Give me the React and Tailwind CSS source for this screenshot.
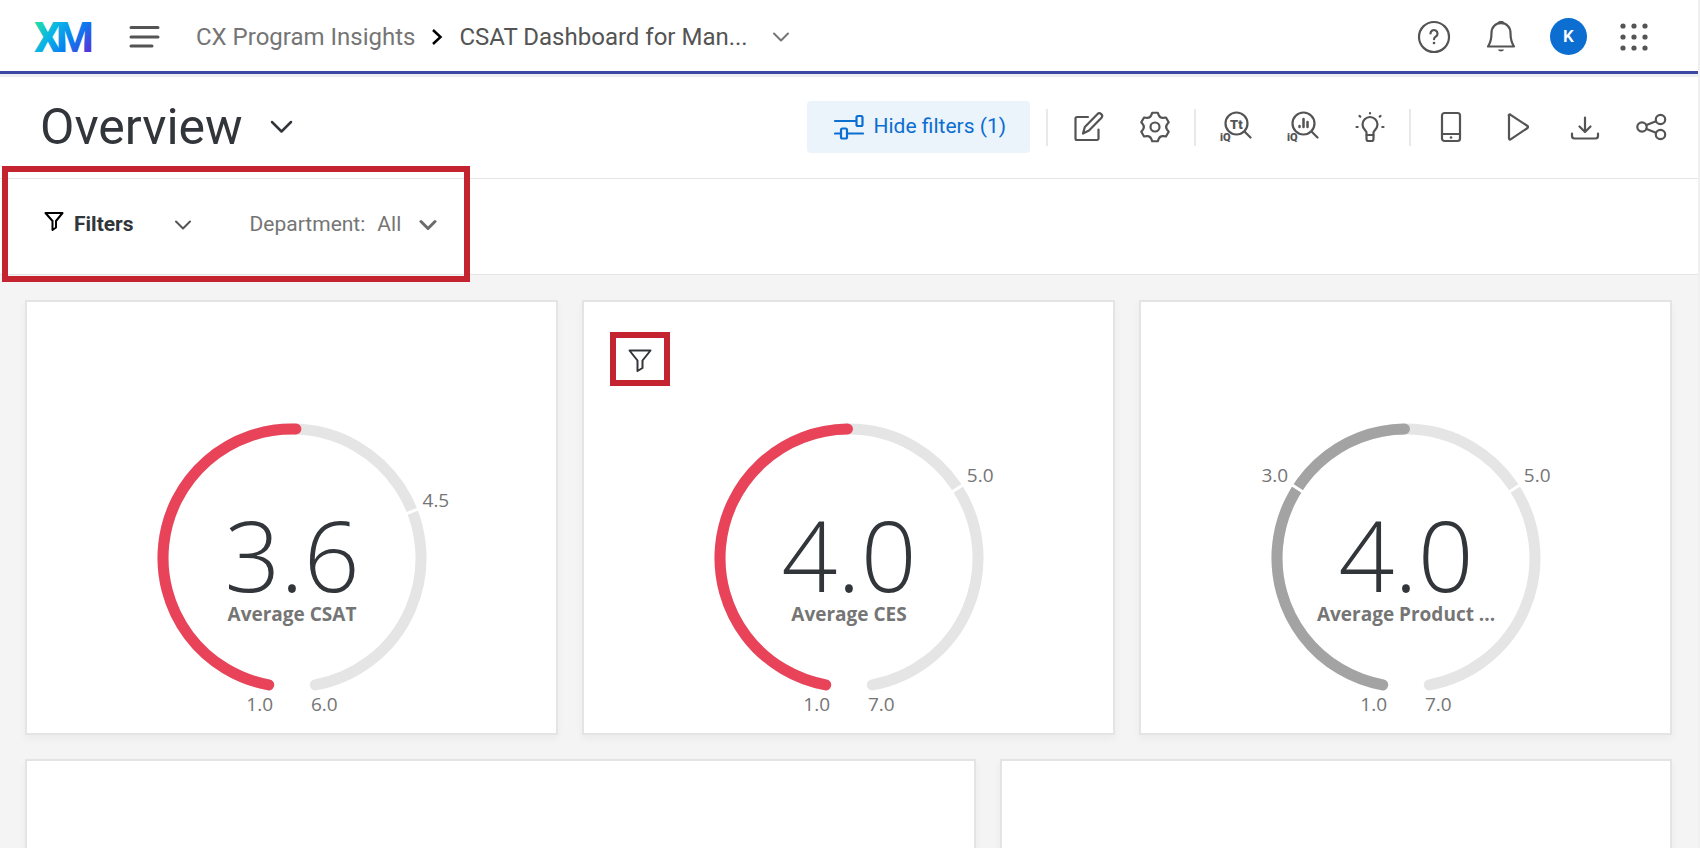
import React from 'react';

const ink = '#545454';

function Icon({ size = 32, color = ink, width = 2.2, className = '', children }) {
  return (
    <svg
      width={size}
      height={size}
      viewBox={`0 0 ${size} ${size}`}
      fill="none"
      stroke={color}
      strokeWidth={width}
      strokeLinecap="round"
      strokeLinejoin="round"
      className={`shrink-0 ${className}`}
      aria-hidden="true"
    >
      {children}
    </svg>
  );
}

function Chevron({ color = ink, width = 2 }) {
  return (
    <svg width="18" height="12" viewBox="0 0 18 12" fill="none" stroke={color} strokeWidth={width} strokeLinecap="round" strokeLinejoin="round" className="shrink-0" aria-hidden="true">
      <path d="M2 2.5l7 7 7-7" />
    </svg>
  );
}

function Funnel({ color = '#32363a' }) {
  return (
    <Icon size={24} color={color} width={2}>
      <path d="M1.500 1.500h21l-8 10v7.500l-5 3v-10.500z" />
    </Icon>
  );
}

function Logo() {
  return (
    <svg width="58" height="34" viewBox="0 0 58 34" role="img" aria-label="XM" className="shrink-0 overflow-visible">
      <defs>
        <linearGradient id="xm" gradientUnits="userSpaceOnUse" x1="4" y1="0" x2="52" y2="36">
          <stop offset="0" stopColor="#21dbaa" />
          <stop offset="0.3" stopColor="#0bb4e6" />
          <stop offset="0.65" stopColor="#0a7cf0" />
          <stop offset="1" stopColor="#5a2fd8" />
        </linearGradient>
      </defs>
      <g fill="url(#xm)" fontFamily="Roboto, sans-serif" fontWeight="800" fontSize="43">
        <text x="-1" y="32">X</text>
        <text x="21" y="32">M</text>
      </g>
    </svg>
  );
}

// point on a circle around the origin, angle in degrees clockwise from the top
function polar(r, deg) {
  const a = (deg * Math.PI) / 180;
  return [r * Math.sin(a), -r * Math.cos(a)];
}

function gearPath() {
  let d = '';
  for (let k = 0; k < 6; k++) {
    const a = k * 60;
    const p = (r, deg) => polar(r, a + deg).map(n => (n + 16).toFixed(2)).join(' ');
    d += `${k === 0 ? 'M' : 'L'}${p(14.5, -11)} L${p(14.5, 11)} L${p(12.3, 18)} Q${p(10.2, 30)} ${p(12.3, 42)} `;
  }
  return d + 'Z';
}

const icons = {
  Edit: (
    <>
      <path d="M16 6H5a1.500 1.500 0 0 0-1.500 1.500v20A1.500 1.500 0 0 0 5 29h20a1.500 1.500 0 0 0 1.500-1.500V18.500" />
      <path d="M11 22.500l1.800-6.500L25.300 3.200a2.700 2.700 0 0 1 4 3.800L17 19.600z" />
    </>
  ),
  Settings: (
    <>
      <path d={gearPath()} />
      <circle cx="16" cy="16" r="4.500" />
    </>
  ),
  'Text iQ': (
    <>
      <circle cx="16.500" cy="12.500" r="11" />
      <path d="M24.500 20.500l6 6" />
      <g fill={ink} stroke="none" fontFamily="Roboto, sans-serif" fontWeight="900">
        <text x="10" y="17.500" fontSize="13">Tt</text>
        <text x="0" y="30" fontSize="11">iQ</text>
      </g>
    </>
  ),
  'Stats iQ': (
    <>
      <circle cx="16.500" cy="12.500" r="11" />
      <path d="M24.500 20.500l6 6" />
      <path d="M12.500 15v1M16.500 8v8M20.500 11v5" strokeWidth="2.500" />
      <text x="0" y="30" fill={ink} stroke="none" fontFamily="Roboto, sans-serif" fontWeight="900" fontSize="11">iQ</text>
    </>
  ),
  Insights: (
    <>
      <path d="M12.500 24v-2.500c0-1.500-4-3.500-4-8a7.500 7.500 0 0 1 15 0c0 4.500-4 6.500-4 8V24z" />
      <path d="M12.500 24.500v3.500a2 2 0 0 0 2 2h3a2 2 0 0 0 2-2v-3.500" />
      <path d="M16 2v.500M5.500 5l.800.600M26.500 5l-.800.600M2.500 16h1.200M28.300 16h1.200" />
    </>
  ),
  'Mobile view': (
    <>
      <rect x="7" y="2" width="18" height="28" rx="2.500" />
      <path d="M7 23h18" />
      <circle cx="16" cy="26.500" r="1.300" fill={ink} stroke="none" />
    </>
  ),
  Present: <path d="M7 5v22.500a1 1 0 0 0 1.600.800L25.500 17a1.200 1.200 0 0 0 0-2L8.600 3.800A1 1 0 0 0 7 5z" />,
  Download: (
    <>
      <path d="M16 6.500v14M10.500 15.500l5.500 5.500 5.500-5.500" />
      <path d="M3 22.500V25a2.500 2.500 0 0 0 2.500 2.500h21A2.500 2.500 0 0 0 29 25v-2.500" />
    </>
  ),
  Share: (
    <>
      <circle cx="6" cy="16" r="4.700" />
      <circle cx="24.500" cy="8.500" r="4.700" />
      <circle cx="24.500" cy="23.500" r="4.700" />
      <path d="M10.500 14l9.500-3.700M10.500 18l9.500 3.700" />
    </>
  ),
};

const toolGroups = [
  ['Edit', 'Settings'],
  ['Text iQ', 'Stats iQ', 'Insights'],
  ['Mobile view', 'Present', 'Download', 'Share'],
];

const gauges = [
  { label: 'Average CSAT', value: '3.6', exact: 3.56, min: 1, max: 6, color: '#e84359', ticks: [4.5] },
  { label: 'Average CES', value: '4.0', exact: 4.03, min: 1, max: 7, color: '#e84359', ticks: [5], filtered: true },
  { label: 'Average Product ...', value: '4.0', exact: 4.03, min: 1, max: 7, color: '#a3a3a3', ticks: [3, 5] },
];

const START = 188;
const SWEEP = 344;
const RADIUS = 129;

function arc(from, to) {
  const [x1, y1] = polar(RADIUS, from);
  const [x2, y2] = polar(RADIUS, to);
  return `M${x1} ${y1} A${RADIUS} ${RADIUS} 0 ${to - from > 180 ? 1 : 0} 1 ${x2} ${y2}`;
}

function Gauge({ label, value, exact, min, max, color, ticks }) {
  const angle = v => START + ((v - min) / (max - min)) * SWEEP;
  const cap = 2.4; // degrees taken up by a round line end

  return (
    <svg width="340" height="320" viewBox="-170 -150 340 320" className="mx-auto block" fontFamily="'Open Sans', sans-serif" role="img" aria-label={`${label}: ${value}`}>
      <g fill="none" strokeWidth="11" strokeLinecap="round">
        <path d={arc(START + cap, START + SWEEP - cap)} stroke="#e5e5e5" />
        <path d={arc(START + cap, angle(exact) - cap)} stroke={color} />
      </g>
      {ticks.map(t => {
        const [x1, y1] = polar(121, angle(t));
        const [x2, y2] = polar(137, angle(t));
        const [tx, ty] = polar(140, angle(t));
        return (
          <g key={t}>
            <line x1={x1} y1={y1} x2={x2} y2={y2} stroke="#fff" strokeWidth="3" />
            <text x={tx} y={ty} textAnchor={tx > 0 ? 'start' : 'end'} fill="#757575" fontSize="19">{t.toFixed(1)}</text>
          </g>
        );
      })}
      <text x="0" y="34" textAnchor="middle" fill="#32363a" fontSize="98" fontWeight="300">{value}</text>
      <text x="0" y="63" textAnchor="middle" fill="#757575" fontSize="19" fontWeight="700">{label}</text>
      <text x="-19" y="153" textAnchor="end" fill="#757575" fontSize="19">{min.toFixed(1)}</text>
      <text x="19" y="153" fill="#757575" fontSize="19">{max.toFixed(1)}</text>
    </svg>
  );
}

const card = 'h-[435px] border-2 border-[#e4e4e4] bg-white shadow-[0_4px_8px_rgba(0,0,0,0.04)]';

export default function App() {
  return (
    <div className="flex h-screen flex-col overflow-hidden border-r-2 border-[#f0f0f0] bg-white font-['Roboto',sans-serif] text-[#32363a]">
      {/* TOP BAR */}
      <header className="relative flex h-[74px] shrink-0 items-center border-b-[3px] border-[#3a47a4] pt-0.5 pr-[49px] pl-[35px] shadow-[0_3px_0_#eceef4]">
        <a href="#home" aria-label="Home"><Logo /></a>
        <button className="ml-9" aria-label="Menu">
          <Icon width={3}>
            <path d="M2 6.500h27M2 16h27M2 25h21" />
          </Icon>
        </button>
        <nav className="ml-[35px] flex items-center text-2xl">
          <a href="#program" className="text-[#757575]">CX Program Insights</a>
          <svg width="12" height="18" viewBox="0 0 12 18" fill="none" stroke="#000" strokeWidth="2.500" className="mx-4" aria-hidden="true">
            <path d="M2 2l7.500 7L2 16" />
          </svg>
          <button className="flex items-center gap-6 text-[#545454]">
            CSAT Dashboard for Man...
            <Chevron color="#757575" />
          </button>
        </nav>
        <div className="ml-auto flex items-center">
          <button className="flex w-[67px] justify-center" aria-label="Help">
            <Icon size={34}>
              <circle cx="17" cy="17" r="15" />
              <path d="M13.500 13.500a3.500 3.500 0 1 1 5.500 2.900c-1.300.900-2 1.500-2 2.800" />
              <circle cx="17" cy="23" r="1.300" fill={ink} stroke="none" />
            </Icon>
          </button>
          <button className="flex w-[67px] justify-center" aria-label="Notifications">
            <Icon size={34}>
              <path d="M17 3.200c-5.800 0-9.500 4-9.500 9.800 0 6-.800 9.500-3.500 13.500h26c-2.700-4-3.500-7.500-3.500-13.500 0-5.800-3.700-9.800-9.500-9.800z" />
              <path d="M14.500 3h5l-1.500-1h-2z" fill={ink} />
              <path d="M14 29.500h6c-.500 2.500-5.500 2.500-6 0z" fill={ink} stroke="none" />
            </Icon>
          </button>
          <button className="mx-4 flex h-[37px] w-[37px] items-center justify-center rounded-full bg-[#0b6ed0] text-[17px] font-semibold text-white">
            K
          </button>
          <button className="ml-4" aria-label="Apps">
            <svg width="30" height="30" viewBox="0 0 30 30" fill={ink} aria-hidden="true">
              {[4, 15, 26].map(y => [4, 15, 26].map(x => <circle key={`${x}-${y}`} cx={x} cy={y} r="2.600" />))}
            </svg>
          </button>
        </div>
      </header>

      {/* PAGE TITLE AND TOOLBAR */}
      <div className="flex h-[105px] shrink-0 items-center border-b border-[#e4e4e4] pt-0.5 pr-[13px] pl-10">
        <button className="flex items-center gap-[27px]">
          <h1 className="text-[50px] leading-[60px]">Overview</h1>
          <svg width="24" height="14" viewBox="0 0 24 14" fill="none" stroke="#32363a" strokeWidth="2.500" strokeLinecap="round" strokeLinejoin="round" aria-hidden="true">
            <path d="M2 2l9.500 9.500L21 2" />
          </svg>
        </button>
        <button className="mr-[10px] ml-auto flex h-[52px] items-center gap-2.5 rounded bg-[#ebf4fb] pr-6 pl-[27px] text-[21px] text-[#0b6ed0]">
          <Icon size={30} color="#0b6ed0">
            <path d="M1 9h21M1 21.500h6M13 21.500h16" />
            <rect x="22.500" y="4" width="6" height="10" rx="1.500" />
            <rect x="7" y="16.500" width="6" height="10" rx="1.500" />
          </Icon>
          Hide filters (1)
        </button>
        {toolGroups.map(group => (
          <div key={group[0]} className="flex items-center">
            <span className="mx-1.5 h-[37px] w-0.5 bg-[#e9e9e9]" />
            {group.map(name => (
              <button key={name} className="flex w-[67px] justify-center" aria-label={name}>
                <Icon>{icons[name]}</Icon>
              </button>
            ))}
          </div>
        ))}
      </div>

      {/* FILTER BAR */}
      <div className="relative flex h-24 shrink-0 items-center border-b border-[#e4e4e4] pb-1 pl-11 text-[21px]">
        <div className="pointer-events-none absolute -top-[13px] left-0.5 h-[116px] w-[468px] border-[6px] border-[#c32430]" />
        <button className="flex items-center font-bold">
          <Icon size={20} color="#000" width={2} className="mr-2.5 mb-2">
            <path d="M1.500 2h17l-6.500 8v6.500l-3.500 2.500v-9z" />
          </Icon>
          <span className="mr-10">Filters</span>
          <Chevron />
        </button>
        <label htmlFor="department" className="ml-[58px] text-[#757575]">Department:</label>
        <div className="relative ml-3 flex items-center text-[#757575]">
          <select id="department" className="w-[60px] appearance-none bg-transparent">
            <option>All</option>
          </select>
          <span className="pointer-events-none absolute right-0">
            <Chevron color="#6b6b6b" width={3} />
          </span>
        </div>
      </div>

      {/* WIDGETS */}
      <main className="grid flex-1 grid-cols-12 content-start gap-6 overflow-hidden bg-[#f4f4f4] pt-[25px] pr-[26px] pl-[25px]">
        {gauges.map(g => (
          <section key={g.label} className={`col-span-4 ${card}`}>
            <div className="h-[106px] pt-[30px] pl-[26px]">
              {g.filtered && (
                <button className="flex h-[54px] w-[60px] items-center justify-center border-[6px] border-[#c32430] pt-1" aria-label="Widget filters">
                  <Funnel />
                </button>
              )}
            </div>
            <Gauge {...g} />
          </section>
        ))}
        <section className={`col-span-7 ${card}`} />
        <section className={`col-span-5 ${card}`} />
      </main>
    </div>
  );
}
